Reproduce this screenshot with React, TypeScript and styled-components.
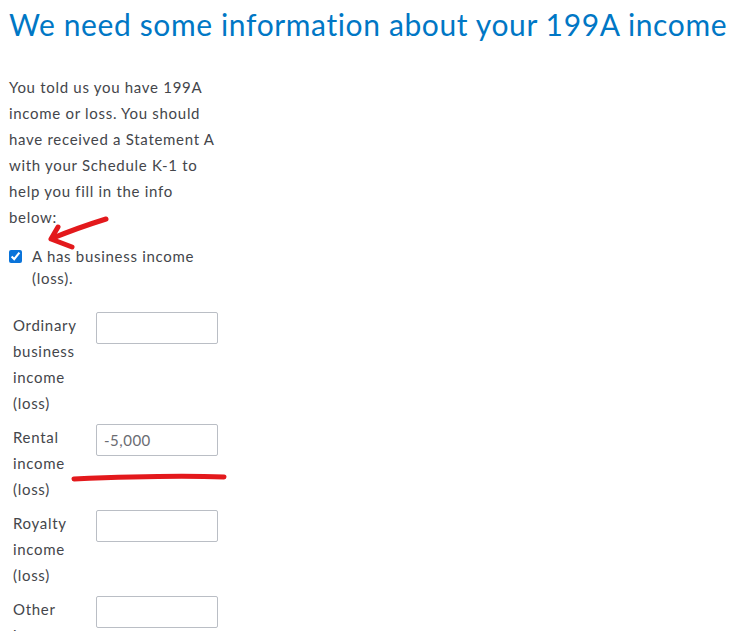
import React from "react";
import styled, { createGlobalStyle } from "styled-components";

const Global = createGlobalStyle`
  html, body { margin: 0; padding: 0; background: #ffffff; }
  body { font-family: "Lato", "Open Sans", sans-serif; color: #44464b; overflow: hidden; }
`;

const Page = styled.div`
  position: relative;
  padding: 0 9px;
  width: 736px;
  height: 631px;
  box-sizing: border-box;
  overflow: hidden;
`;

const Title = styled.h1`
  margin: 0;
  padding-top: 5px;
  font-size: 30px;
  font-weight: 400;
  line-height: 38px;
  letter-spacing: 0.62px;
  color: #0077c5;
  white-space: nowrap;
`;

const Intro = styled.p`
  margin: 31px 0 0;
  font-size: 15px;
  line-height: 26px;
  letter-spacing: 0.7px;
  white-space: nowrap;
`;

const CheckRow = styled.label`
  display: flex;
  align-items: flex-start;
  gap: 10px;
  margin-top: 15px;
  font-size: 15px;
  line-height: 22px;
  letter-spacing: 0.7px;
  white-space: nowrap;
`;

const Box = styled.input`
  margin: 5px 0 0;
  width: 13px;
  height: 13px;
  accent-color: #0a74da;
  flex: none;
`;

const Fields = styled.div`
  display: flex;
  flex-direction: column;
  gap: 8px;
  margin-top: 23px;
  padding-left: 4px;
`;

const Row = styled.div`
  display: grid;
  grid-template-columns: 83px 122px;
  align-items: start;
`;

const Label = styled.div`
  font-size: 15px;
  line-height: 26px;
  letter-spacing: 0.7px;
  width: 70px;
`;

const Field = styled.input`
  box-sizing: border-box;
  width: 122px;
  height: 32px;
  border: 1px solid #babec5;
  border-radius: 2px;
  padding: 0 7px;
  font-family: "Lato", "Open Sans", sans-serif;
  font-size: 15px;
  letter-spacing: 0.5px;
  color: #6b6c72;
  outline: none;
`;

const Marks = styled.svg`
  position: absolute;
  left: 0;
  top: 0;
  pointer-events: none;
`;

const rows = [
  { label: "Ordinary business income (loss)", value: "" },
  { label: "Rental income (loss)", value: "-5,000" },
  { label: "Royalty income (loss)", value: "" },
  { label: "Other income (loss)", value: "" },
];

const introLines = [
  "You told us you have 199A",
  "income or loss. You should",
  "have received a Statement A",
  "with your Schedule K-1 to",
  "help you fill in the info",
  "below:",
];

export default function App() {
  return (
    <Page>
      <Global />
      <Title>We need some information about your 199A income</Title>
      <Intro>
        {introLines.map((l, i) => (
          <React.Fragment key={i}>
            {l}
            {i < introLines.length - 1 && <br />}
          </React.Fragment>
        ))}
      </Intro>
      <CheckRow>
        <Box type="checkbox" defaultChecked />
        <span>
          A has business income
          <br />
          (loss).
        </span>
      </CheckRow>
      <Fields>
        {rows.map((r) => (
          <Row key={r.label}>
            <Label>{r.label}</Label>
            <Field defaultValue={r.value} />
          </Row>
        ))}
      </Fields>
      <Marks width="736" height="631" viewBox="0 0 736 631">
        <path
          d="M106 219 C 90 224, 70 231, 53 238"
          stroke="#e3191c"
          strokeWidth="5"
          fill="none"
          strokeLinecap="round"
        />
        <path
          d="M58 227 L 51 239 L 72 247"
          stroke="#e3191c"
          strokeWidth="5"
          fill="none"
          strokeLinecap="round"
          strokeLinejoin="round"
        />
        <path
          d="M74 479 C 120 477, 170 475, 224 477"
          stroke="#e3191c"
          strokeWidth="5"
          fill="none"
          strokeLinecap="round"
        />
      </Marks>
    </Page>
  );
}
